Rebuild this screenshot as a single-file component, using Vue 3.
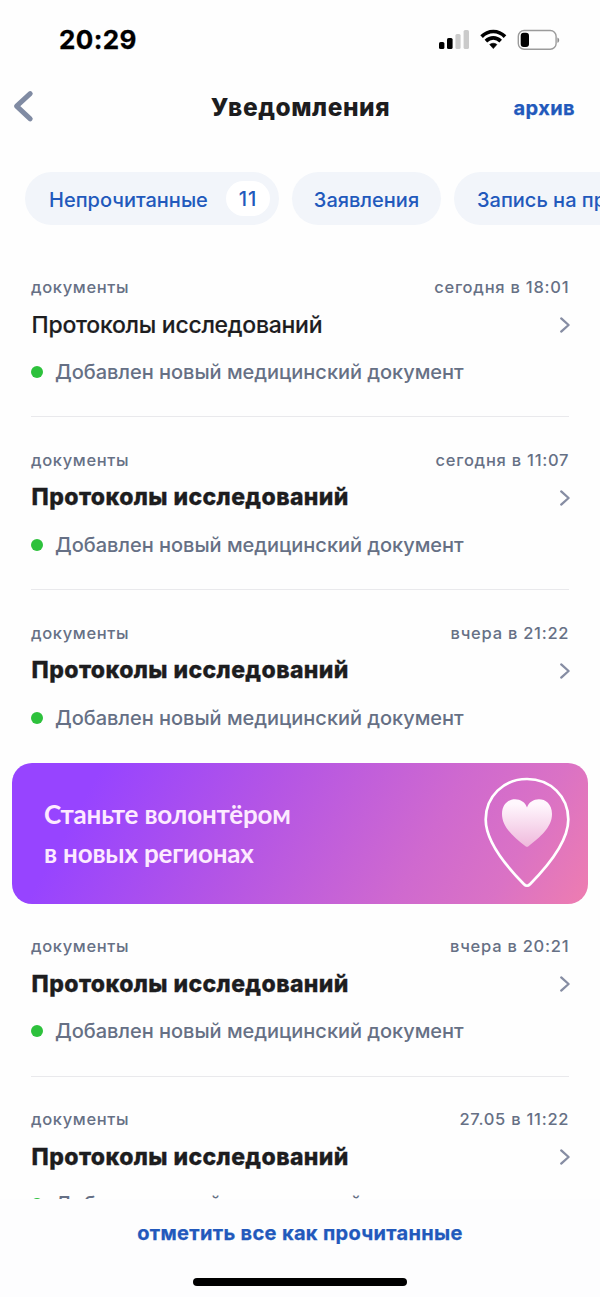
<script setup>
const filters = [
  { label: 'Непрочитанные', count: 11, size: 'wide' },
  { label: 'Заявления', size: 'mid' },
  { label: 'Запись на приём', size: 'long' },
]

const title = 'Протоколы исследований'
const text = 'Добавлен новый медицинский документ'

const before = [
  { date: 'сегодня в 18:01', read: true, line: true },
  { date: 'сегодня в 11:07', line: true },
  { date: 'вчера в 21:22' },
]
const after = [
  { date: 'вчера в 20:21', line: true, late: true },
  { date: '27.05 в 11:22', late: true },
]
const blocks = [
  ...before.map((item) => ({ kind: 'note', ...item })),
  { kind: 'banner' },
  ...after.map((item) => ({ kind: 'note', ...item })),
]
</script>

<template>
  <main class="screen">
    <div class="status">
      <span class="clock">20:29</span>
      <svg class="indicators" width="124" height="24" viewBox="0 0 124 24">
        <g fill="#000">
          <rect x="3" y="14" width="5.4" height="7" rx="1.6" />
          <rect x="11" y="10" width="5.6" height="11" rx="1.6" />
        </g>
        <g fill="#cbcbcb">
          <rect x="19.4" y="6" width="5.2" height="15" rx="1.6" />
          <rect x="27.6" y="2" width="5.4" height="19" rx="1.6" />
        </g>
        <g fill="none" stroke="#000" stroke-width="3.7">
          <path d="M45.6 8.6C52.3 1.8 62.3 1.8 69 8.6" />
          <path d="M49.9 13.1C54.3 8.9 60.3 8.9 64.7 13.1" />
        </g>
        <path d="M53.7 16.5C56 14.8 58.6 14.8 60.9 16.5L57.3 20.6Z" fill="#000" stroke="#000" stroke-width=".6" stroke-linejoin="round" />
        <rect x="82.3" y="2.5" width="37.8" height="18.8" rx="5.8" fill="none" stroke="#9b9b9b" stroke-width="1.4" />
        <rect x="84.7" y="4.8" width="8.3" height="14.2" rx="3" fill="#000" />
        <path d="M121.4 9.4C123.8 10.2 123.8 14 121.4 14.8Z" fill="#8e8e8e" />
      </svg>
    </div>

    <header class="head">
      <svg class="back" width="24" height="34" viewBox="0 0 24 34">
        <path d="M18.2 4.6L4.6 17.2L18.2 29.8" fill="none" stroke="#808ba3" stroke-width="5" stroke-linecap="round" stroke-linejoin="round" />
      </svg>
      <h1>Уведомления</h1>
      <a class="archive">архив</a>
    </header>

    <nav class="filters">
      <button v-for="f in filters" :key="f.label" class="chip" :class="f.size">
        <span class="name">{{ f.label }}</span>
        <span v-if="f.count" class="count">{{ f.count }}</span>
      </button>
    </nav>

    <section class="list">
      <template v-for="(b, i) in blocks" :key="i">
        <article v-if="b.kind === 'note'" class="note" :class="{ read: b.read, line: b.line, late: b.late }">
          <div class="meta">
            <span>документы</span>
            <time>{{ b.date }}</time>
          </div>
          <div class="title">
            <h2>{{ title }}</h2>
            <svg width="14" height="20" viewBox="0 0 14 20">
              <path d="M3.2 3.4L10.6 10L3.2 16.6" fill="none" stroke="#868da3" stroke-width="2.3" stroke-linecap="round" stroke-linejoin="round" />
            </svg>
          </div>
          <p class="text"><i class="dot"></i><span>{{ text }}</span></p>
        </article>
        <aside v-else class="banner">
          <p>Станьте волонтёром<br />в новых регионах</p>
          <svg width="90" height="114" viewBox="0 0 90 114">
            <defs>
              <linearGradient id="heart" x1="0" y1="0" x2="0" y2="1">
                <stop offset="0.1" stop-color="#fff7fd" />
                <stop offset="1" stop-color="#efb9dc" />
              </linearGradient>
            </defs>
            <path d="M45 3C21.5 3 3.7 20.5 3.7 43.5C3.7 66 24 90 42 108.2Q45 111.300 48 108.200C66 90 86.300 66 86.300 43.500C86.300 20.500 68.500 3 45 3Z" fill="none" stroke="#fff" stroke-width="2.7" />
            <path d="M45 31.500C41.500 19.500 20 19.500 20 38C20 51.500 32 61 43.500 70.300Q45 71.400 46.500 70.300C58 61 70 51.500 70 38C70 19.500 48.500 19.500 45 31.500Z" fill="url(#heart)" />
          </svg>
        </aside>
      </template>
    </section>

    <footer class="bottom">
      <a>отметить все как прочитанные</a>
      <div class="home"></div>
    </footer>
  </main>
</template>

<style>
body {
  margin: 0;
  background: #fefefe;
}
</style>

<style scoped>
.screen {
  box-sizing: border-box;
  width: 600px;
  height: 1297px;
  overflow: hidden;
  display: flex;
  flex-direction: column;
  background: #fefefe;
  color: #1d1d1f;
  font-family: Inter, 'Liberation Sans', sans-serif;
}
.screen * {
  box-sizing: border-box;
}
.status {
  flex: none;
  height: 80px;
  padding: 0 40px 0 59px;
  display: flex;
  align-items: center;
  justify-content: space-between;
}
.clock {
  color: #000;
  font-size: 26px;
  font-weight: 700;
  line-height: 32px;
  letter-spacing: 0.4px;
  -webkit-text-stroke: 0.3px currentColor;
}
.indicators {
  overflow: visible;
  margin-bottom: 1px;
}
.head {
  flex: none;
  height: 92px;
  padding: 0 26px 0 12px;
  display: grid;
  grid-template-columns: 120px 1fr 106px;
  align-items: start;
}
.back {
  margin-top: 9px;
}
h1 {
  margin: 11px 0 0 1px;
  text-align: center;
  font-size: 24.5px;
  line-height: 32px;
  font-weight: 800;
  letter-spacing: 0.55px;
}
.archive {
  margin-top: 14px;
  text-align: right;
  font-size: 20px;
  line-height: 28px;
  font-weight: 700;
  letter-spacing: 0.4px;
  margin-right: -1px;
  color: #2259bc;
  -webkit-text-stroke: 0.25px currentColor;
}
.filters {
  flex: none;
  height: 72px;
  padding-left: 25px;
  display: flex;
  align-items: flex-start;
  gap: 13px;
}
.chip {
  flex: none;
  height: 53px;
  padding: 1px 0 0;
  border: 0;
  border-radius: 27px;
  background: #f2f5fa;
  color: #2259bc;
  font: 500 20px/28px Inter, 'Liberation Sans', sans-serif;
  display: flex;
  align-items: center;
  justify-content: center;
  white-space: nowrap;
}
.wide {
  width: 254px;
  padding: 0 9px 0 24px;
  justify-content: space-between;
}
.mid {
  width: 149px;
}
.long {
  width: 210px;
  padding-left: 23px;
  justify-content: flex-start;
}
.name {
  margin-top: 1px;
}
.wide .name {
  margin-top: 2px;
}
.count {
  width: 44px;
  height: 35px;
  border-radius: 18px;
  background: #fff;
  text-align: center;
  line-height: 37px;
  letter-spacing: 1px;
}
.list {
  flex: none;
  height: 955px;
  overflow: hidden;
}
.note {
  height: 173px;
  margin: 0 31px;
  padding-top: 31px;
}
.note.line {
  border-bottom: 1px solid #e9e9ec;
}
.note.late {
  padding-top: 30px;
}
.meta {
  display: flex;
  justify-content: space-between;
  color: #667085;
  font-size: 16.5px;
  line-height: 24px;
  font-weight: 500;
  letter-spacing: 0.64px;
}
.meta time {
  letter-spacing: 0.75px;
  margin-right: -0.3px;
}
.title {
  display: flex;
  align-items: center;
  justify-content: space-between;
  height: 32px;
  margin-top: 10px;
}
.title svg {
  margin-right: -3px;
}
h2 {
  margin: 0 0 0 0.6px;
  font-size: 23px;
  line-height: 32px;
  font-weight: 800;
  letter-spacing: 0.4px;
  -webkit-text-stroke: 0.3px currentColor;
}
.note:not(.read):not(.late) h2 {
  margin-bottom: 2px;
}
.read h2 {
  font-weight: 500;
  letter-spacing: -0.27px;
  -webkit-text-stroke: 0.15px currentColor;
}
.text {
  display: flex;
  align-items: center;
  gap: 12px;
  margin: 17px 0 0;
  height: 28px;
  color: #667085;
  font-size: 20px;
  line-height: 28px;
  font-weight: 500;
  letter-spacing: -0.03px;
  white-space: nowrap;
}
.dot {
  width: 12px;
  height: 12px;
  border-radius: 50%;
  background: #2dc13c;
}
.banner {
  height: 141px;
  margin: 0 12px;
  padding: 0 16px 0 32px;
  display: flex;
  align-items: center;
  justify-content: space-between;
  border-radius: 20px;
  background: linear-gradient(119deg, #9744ff 14%, #b455e5 42%, #cf69cf 70%, #da72c5 85%, #ee7db0 100%);
}
.banner svg {
  margin-bottom: 1px;
}
.banner p {
  margin: 0;
  color: #fdeaff;
  font: 700 26px/39px Lato, 'Noto Sans', sans-serif;
  letter-spacing: -0.18px;
}
.bottom {
  flex: none;
  height: 98px;
  display: flex;
  flex-direction: column;
  align-items: center;
  background: #fdfdfe;
}
.bottom a {
  margin-top: 20px;
  color: #2259bc;
  font-size: 20px;
  line-height: 28px;
  font-weight: 700;
  letter-spacing: 0.33px;
  -webkit-text-stroke: 0.25px currentColor;
}
.home {
  width: 214px;
  height: 8px;
  margin-top: 31px;
  border-radius: 4px;
  background: #000;
}
</style>
